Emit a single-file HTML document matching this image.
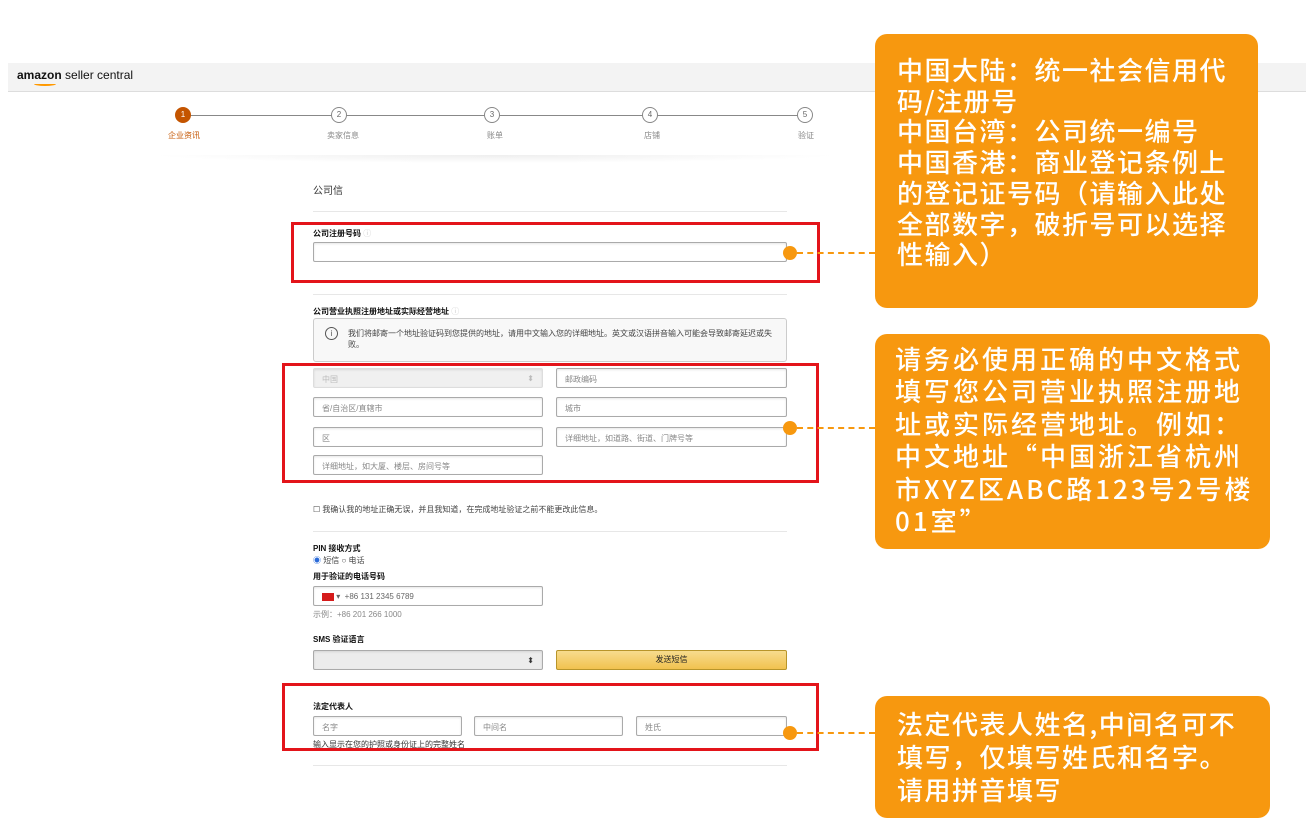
<!DOCTYPE html>
<html><head><meta charset="utf-8"><style>
*{box-sizing:border-box;margin:0;padding:0}
body{width:1306px;height:832px;background:#fff;position:relative;overflow:hidden;font-family:"Liberation Sans","Noto Sans CJK SC",sans-serif;font-size:8px;color:#333}
.a{position:absolute}
.inp{position:absolute;height:20px;border:1px solid #aaa;border-radius:2px;background:#fff;font-size:8px;color:#888;padding:5px 8px;box-shadow:inset 0 1px 2px rgba(0,0,0,.1)}
.red{position:absolute;border:3px solid #e3141a}
.ob{position:absolute;background:#f7980f;border-radius:12px}
.ot{position:absolute;color:#fff;font-size:26px;line-height:32px;white-space:nowrap;font-family:"Noto Sans CJK SC","Liberation Sans",sans-serif;font-weight:500}
.dot{position:absolute;width:14px;height:14px;border-radius:50%;background:#f7980f}
.dash{position:absolute;border-top:2px dashed #f7980f;height:0}
.step{position:absolute;width:16px;height:16px;border-radius:50%;border:1px solid #888;background:#fff;font-size:8px;text-align:center;line-height:14px;color:#666}
.sl{position:absolute;font-size:8px;color:#888}
.hr{position:absolute;left:313px;width:474px;border-top:1px solid #e7e7e7}
b{font-weight:bold;color:#111}
</style></head><body>
<div class="a" style="left:8px;top:63px;width:1298px;height:29px;background:#f3f3f3;border-bottom:1px solid #ddd"></div>
<div class="a" style="left:17px;top:68px;font-size:12px;color:#111"><b style="font-size:12px">amazon</b> seller central</div>
<div class="a" style="left:34px;top:82px;width:22px;height:4px;border-bottom:2px solid #f90;border-radius:0 0 50% 50%"></div>
<div class="a" style="left:185px;top:115px;width:620px;border-top:1px solid #888"></div>
<div class="step" style="left:175px;top:107px;background:#c45500;border-color:#c45500;color:#fff">1</div>
<div class="step" style="left:331px;top:107px">2</div>
<div class="step" style="left:484px;top:107px">3</div>
<div class="step" style="left:642px;top:107px">4</div>
<div class="step" style="left:797px;top:107px">5</div>
<div class="sl" style="left:168px;top:130px;color:#c45500">企业资讯</div>
<div class="sl" style="left:327px;top:130px">卖家信息</div>
<div class="sl" style="left:487px;top:130px">账单</div>
<div class="sl" style="left:644px;top:130px">店铺</div>
<div class="sl" style="left:798px;top:130px">验证</div>
<div class="a" style="left:150px;top:155px;width:690px;height:8px;background:radial-gradient(ellipse at top,#eee,#fff 70%)"></div>
<div class="a" style="left:313px;top:182px;font-size:10px;color:#333">公司信</div>
<div class="hr" style="top:211px"></div>
<div class="a" style="left:313px;top:228px"><b>公司注册号码</b> <span style="color:#ccc">ⓘ</span></div>
<div class="inp" style="left:313px;top:242px;width:474px"></div>
<div class="hr" style="top:294px"></div>
<div class="a" style="left:313px;top:306px"><b>公司营业执照注册地址或实际经营地址</b> <span style="color:#ccc">ⓘ</span></div>
<div class="a" style="left:313px;top:318px;width:474px;height:44px;border:1px solid #ccc;border-radius:3px;background:#f8f8f8"></div>
<div class="a" style="left:325px;top:327px;width:13px;height:13px;border:1px solid #555;border-radius:50%;font-size:8px;text-align:center;line-height:11px;color:#555">i</div>
<div class="a" style="left:348px;top:328px;width:430px;line-height:11px;color:#444">我们将邮寄一个地址验证码到您提供的地址，请用中文输入您的详细地址。英文或汉语拼音输入可能会导致邮寄延迟或失败。</div>
<div class="inp" style="left:313px;top:368px;width:230px;background:#f0f0f0;border-color:#ddd;color:#bbb">中国<span style="float:right">⬍</span></div>
<div class="inp" style="left:556px;top:368px;width:231px">邮政编码</div>
<div class="inp" style="left:313px;top:397px;width:230px">省/自治区/直辖市</div>
<div class="inp" style="left:556px;top:397px;width:231px">城市</div>
<div class="inp" style="left:313px;top:427px;width:230px">区</div>
<div class="inp" style="left:556px;top:427px;width:231px">详细地址，如道路、街道、门牌号等</div>
<div class="inp" style="left:313px;top:455px;width:230px">详细地址，如大厦、楼层、房间号等</div>
<div class="a" style="left:313px;top:504px;color:#444">☐ 我确认我的地址正确无误，并且我知道，在完成地址验证之前不能更改此信息。</div>
<div class="hr" style="top:531px"></div>
<div class="a" style="left:313px;top:543px"><b>PIN 接收方式</b></div>
<div class="a" style="left:313px;top:555px;color:#444"><span style="color:#2a6ad8">◉</span> 短信 ○ 电话</div>
<div class="a" style="left:313px;top:571px"><b>用于验证的电话号码</b></div>
<div class="inp" style="left:313px;top:586px;width:230px;color:#666"><span style="display:inline-block;width:12px;height:8px;background:#d51b1b;vertical-align:middle"></span> ▾ &nbsp;+86 131 2345 6789</div>
<div class="a" style="left:313px;top:609px;color:#888">示例：+86 201 266 1000</div>
<div class="a" style="left:313px;top:634px"><b>SMS 验证语言</b></div>
<div class="inp" style="left:313px;top:650px;width:230px;background:#ececec;color:#333;text-align:right">⬍</div>
<div class="a" style="left:556px;top:650px;width:231px;height:20px;border:1px solid #b8952a;border-radius:2px;background:linear-gradient(#f7dc8e,#f1c24f);text-align:center;line-height:18px;color:#222">发送短信</div>
<div class="a" style="left:313px;top:701px"><b>法定代表人</b></div>
<div class="inp" style="left:313px;top:716px;width:149px">名字</div>
<div class="inp" style="left:474px;top:716px;width:149px">中间名</div>
<div class="inp" style="left:636px;top:716px;width:151px">姓氏</div>
<div class="a" style="left:313px;top:739px;color:#333">输入显示在您的护照或身份证上的完整姓名</div>
<div class="hr" style="top:765px"></div>
<div class="red" style="left:291px;top:222px;width:529px;height:61px"></div>
<div class="red" style="left:282px;top:363px;width:537px;height:120px"></div>
<div class="red" style="left:282px;top:683px;width:537px;height:68px"></div>
<div class="dot" style="left:783px;top:246px"></div><div class="dash" style="left:797px;top:252px;width:78px"></div>
<div class="dot" style="left:783px;top:421px"></div><div class="dash" style="left:797px;top:427px;width:78px"></div>
<div class="dot" style="left:783px;top:726px"></div><div class="dash" style="left:797px;top:732px;width:78px"></div>
<div class="ob" style="left:875px;top:34px;width:383px;height:274px"></div>
<div class="ot" style="left:897px;top:55px;letter-spacing:1.5px;line-height:30.7px">中国大陆：统一社会信用代<br>码/注册号<br>中国台湾：公司统一编号<br>中国香港：商业登记条例上<br>的登记证号码（请输入此处<br>全部数字，破折号可以选择<br>性输入）</div>
<div class="ob" style="left:875px;top:334px;width:395px;height:215px"></div>
<div class="ot" style="left:895px;top:343px;letter-spacing:3px;line-height:32.4px">请务必使用正确的中文格式<br>填写您公司营业执照注册地<br>址或实际经营地址。例如：<br>中文地址“中国浙江省杭州<br>市XYZ区ABC路123号2号楼<br>01室”</div>
<div class="ob" style="left:875px;top:696px;width:395px;height:122px"></div>
<div class="ot" style="left:897px;top:707px;letter-spacing:1.5px;line-height:33px">法定代表人姓名,中间名可不<br>填写，仅填写姓氏和名字。<br>请用拼音填写</div>
</body></html>
